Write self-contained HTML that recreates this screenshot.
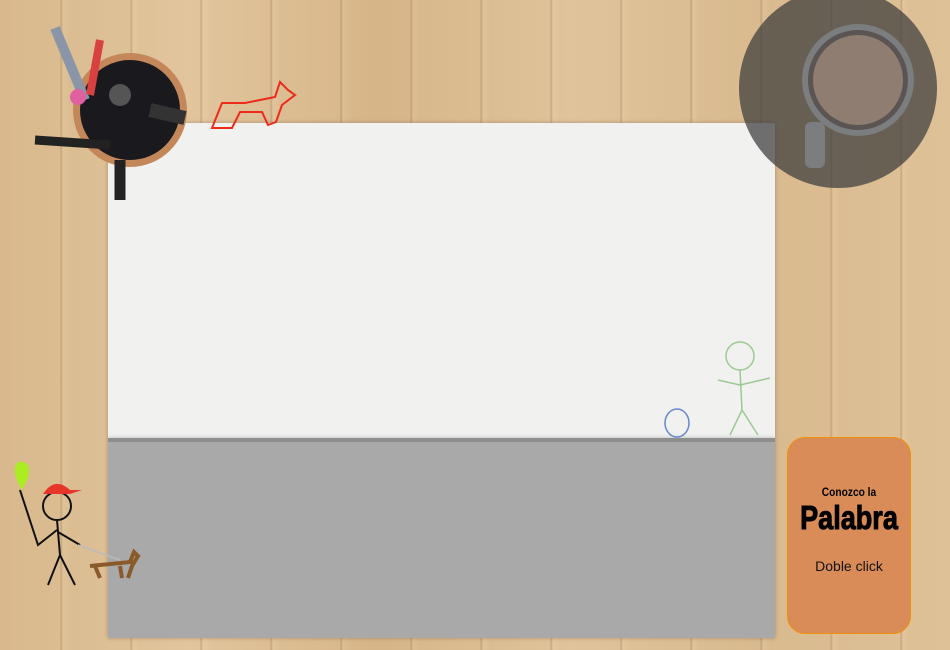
<!DOCTYPE html>
<html><head><meta charset="utf-8"><style>
body{margin:0;width:950px;height:650px;overflow:hidden;position:relative;font-family:"Liberation Sans",sans-serif;
background:#dcbd93;
background-image:repeating-linear-gradient(90deg,rgba(120,80,40,0) 0,rgba(120,80,40,0) 60px,rgba(120,80,40,.25) 61px,rgba(255,240,210,.12) 63px,rgba(120,80,40,0) 70px),
linear-gradient(90deg,#d8b88c,#e2c59d 20%,#d6b588 40%,#e0c39b 60%,#d9ba8f 80%,#dfc198);}
.paper{position:absolute;left:108px;top:123px;width:667px;height:315px;background:#f1f1f0;box-shadow:0 0 4px rgba(0,0,0,.25)}
.gray{position:absolute;left:108px;top:438px;width:667px;height:200px;background:#a9a9a9;border-top:4px solid #8e8e8e;box-sizing:border-box;box-shadow:0 0 4px rgba(0,0,0,.25)}
.card{position:absolute;left:787px;top:437px;width:124px;height:197px;background:#d98c57;border:1px solid #f0900a;border-radius:18px;box-sizing:border-box;text-align:center}
.c1{position:absolute;top:47px;width:100%;font:bold 12px "Liberation Sans Narrow","Liberation Sans",sans-serif;transform:scaleX(.85)}
.c2{position:absolute;top:61px;width:100%;font:bold 33px "Liberation Sans Narrow","Liberation Sans",sans-serif;transform:scaleX(.82);-webkit-text-stroke:1px #000}
.c3{position:absolute;top:120px;width:100%;font-size:14px;color:#111}
.cup{position:absolute;left:739px;top:-12px;width:198px;height:200px;border-radius:50%;background:rgba(60,60,60,.72)}
</style></head><body>
<div class="paper"></div>
<div class="gray"></div>
<div class="cup"></div>
<svg style="position:absolute;left:0;top:0" width="950" height="650">
<circle cx="858" cy="80" r="56" fill="#7c7d7f"/>
<circle cx="858" cy="80" r="50" fill="#5a5552"/>
<circle cx="858" cy="80" r="45" fill="#8e7d70"/>
<rect x="805" y="122" width="20" height="46" rx="6" fill="#7c7d7f"/>
<circle cx="130" cy="110" r="57" fill="#c4875a"/>
<circle cx="130" cy="110" r="50" fill="#1a1a1e"/>
<line x1="55" y1="28" x2="85" y2="100" stroke="#8a96a8" stroke-width="10"/>
<line x1="100" y1="40" x2="90" y2="95" stroke="#d94040" stroke-width="8"/>
<line x1="35" y1="140" x2="110" y2="145" stroke="#222" stroke-width="9"/>
<line x1="120" y1="160" x2="120" y2="200" stroke="#222" stroke-width="11"/>
<line x1="150" y1="110" x2="185" y2="118" stroke="#333" stroke-width="14"/>
<circle cx="78" cy="97" r="8" fill="#e060a0"/>
<circle cx="120" cy="95" r="11" fill="#555"/>
<path d="M212 128 L222 103 L245 103 L275 97 L280 82 L288 90 L295 95 L282 105 L276 122 L268 125 L262 112 L240 112 L232 128 Z" fill="none" stroke="#ee2a1a" stroke-width="2"/>
<ellipse cx="677" cy="423" rx="12" ry="14" fill="none" stroke="#6688cc" stroke-width="1.5"/>
<g fill="none" stroke="#9cc892" stroke-width="1.5"><circle cx="740" cy="356" r="14"/><path d="M740 370 L742 410 L730 435 M742 410 L758 435 M740 385 L718 380 M740 385 L770 378"/></g>
<path d="M22 490 Q10 470 18 462 Q32 460 28 478 Z" fill="#aaee22"/>
<g fill="none" stroke="#111" stroke-width="2"><circle cx="57" cy="506" r="14"/><path d="M57 520 L60 555 L48 585 M60 555 L75 585 M57 530 L38 545 L20 490 M58 532 L80 545"/></g>
<path d="M43 494 Q55 476 70 490 L82 490 L70 494 Z" fill="#e8352a"/>
<path d="M78 545 L120 560" stroke="#bbb" stroke-width="1.5"/>
<path d="M90 566 L130 562 L134 552 L138 556 L132 566 L128 578 M95 566 L100 578 M120 566 L122 578" fill="none" stroke="#8a5a2a" stroke-width="4"/>
</svg>
<div class="card"><div class="c1">Conozco la</div><div class="c2">Palabra</div><div class="c3">Doble click</div></div>
</body></html>
